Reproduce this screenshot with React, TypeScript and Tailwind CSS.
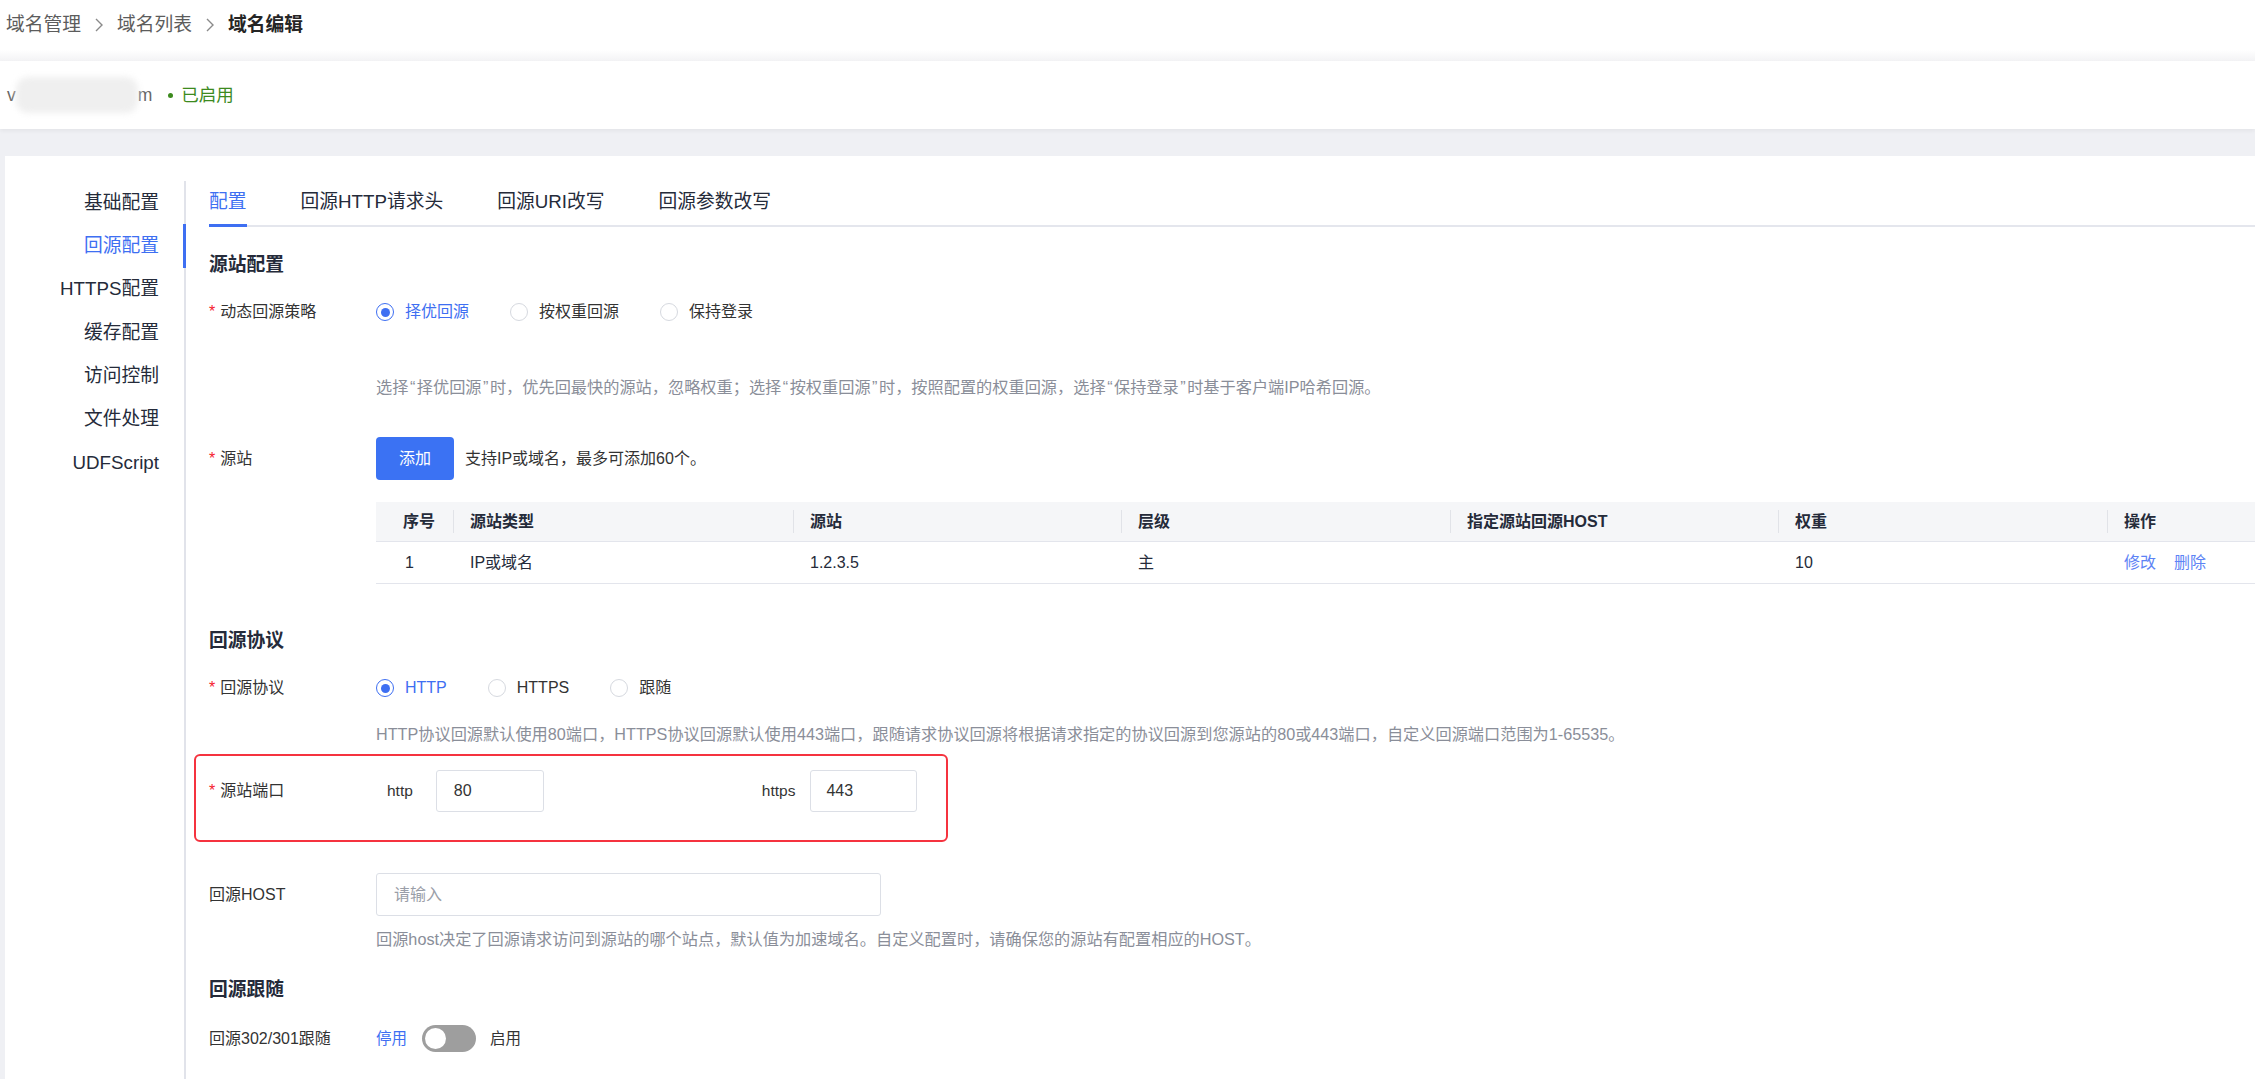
import React from 'react';

const menu = ['基础配置', '回源配置', 'HTTPS配置', '缓存配置', '访问控制', '文件处理', 'UDFScript'];
const tabs = ['配置', '回源HTTP请求头', '回源URI改写', '回源参数改写'];
const columns = ['序号', '源站类型', '源站', '层级', '指定源站回源HOST', '权重', '操作'];

function Chevron() {
  return (
    <svg width="8" height="14" viewBox="0 0 8 14" className="mx-[14px]">
      <polyline points="1,1 7,7 1,13" fill="none" stroke="#8a8a8a" strokeWidth="1.4" />
    </svg>
  );
}

function Q({ c }: { c: string }) {
  return <span className="mx-[1.5px]">{c}</span>;
}

function Radio({ checked, label }: { checked?: boolean; label: string }) {
  return (
    <div className="flex items-center">
      {checked ? (
        <span className="w-[18px] h-[18px] rounded-full border-[1.5px] border-[#3e6ff2] flex items-center justify-center">
          <span className="w-[9px] h-[9px] rounded-full bg-[#3e6ff2]" />
        </span>
      ) : (
        <span className="w-[18px] h-[18px] rounded-full border border-[#d6d9df]" />
      )}
      <span className={checked ? 'ml-[11px] text-[#3e6ff2]' : 'ml-[11px] text-[#333]'}>{label}</span>
    </div>
  );
}

function Label({ text, required }: { text: string; required?: boolean }) {
  return (
    <div className="w-[167px] shrink-0 text-[#333] flex items-center">
      {required && <span className="text-[#f5222d] mr-[5px]">*</span>}
      <span>{text}</span>
    </div>
  );
}

export default function App() {
  return (
    <div className="w-[2255px] h-[1079px] overflow-hidden bg-white text-[16px] text-[#333] font-['Liberation_Sans','Noto_Sans_CJK_SC',sans-serif]">
      {/* Breadcrumb */}
      <div className="h-[50px] flex items-center pl-[6px] text-[18.75px]">
        <span className="text-[#5c5c5c]">域名管理</span>
        <Chevron />
        <span className="text-[#5c5c5c]">域名列表</span>
        <Chevron />
        <span className="font-bold text-[#252525]">域名编辑</span>
      </div>
      <div className="h-[11px] bg-gradient-to-b from-white to-[#f3f3f5]" />

      {/* Domain bar */}
      <div className="h-[68px] flex items-center pl-[7px] text-[17.5px] bg-white relative z-10 shadow-[0_2px_4px_rgba(0,0,0,0.05)]">
        <span className="text-[#666]">v</span>
        <span className="w-[122px] h-[36px] rounded-[12px] bg-[#efefef] blur-[3px]" />
        <span className="text-[#666]">m</span>
        <span className="ml-[16px] w-[5px] h-[5px] rounded-full bg-[#3c8a1e]" />
        <span className="ml-[8px] text-[#3c8a1e]">已启用</span>
      </div>

      {/* Body */}
      <div className="bg-[#eff0f4] pl-[5px] pt-[27px] h-full">
        <div className="bg-white flex h-full">
          {/* Side menu */}
          <div className="w-[181px] shrink-0 mt-[25px] border-r-2 border-[#e1e3ea]">
            {menu.map((m, i) => (
              <div key={m} className="relative h-[43.33px] flex items-center justify-end pr-[25px] text-[18.75px]">
                <span className={i === 1 ? 'text-[#3e6ff2]' : 'text-[#252b3a]'}>{m}</span>
                {i === 1 && <span className="absolute right-[-2px] top-0 w-[3px] h-full bg-[#3e6ff2]" />}
              </div>
            ))}
          </div>

          {/* Content */}
          <div className="flex-1 pl-[23px]">
            {/* Tabs */}
            <div className="mt-[24px] flex gap-[54px] border-b-2 border-[#e4e6ed] text-[18.75px]">
              {tabs.map((t, i) => (
                <div
                  key={t}
                  className={
                    i === 0
                      ? 'h-[47px] pt-[9px] leading-[26px] -mb-[2px] border-b-[3px] border-[#3e6ff2] text-[#3e6ff2]'
                      : 'h-[45px] pt-[9px] leading-[26px] text-[#252b3a]'
                  }
                >
                  {t}
                </div>
              ))}
            </div>

            {/* 源站配置 */}
            <div className="mt-[25px] leading-[26px] text-[18.75px] font-bold text-[#252b3a]">源站配置</div>

            <div className="mt-[21px] flex h-[26px] items-center">
              <Label text="动态回源策略" required />
              <div className="flex items-center gap-[41px]">
                <Radio checked label="择优回源" />
                <Radio label="按权重回源" />
                <Radio label="保持登录" />
              </div>
            </div>
            <div className="mt-[51px] ml-[167px] leading-[22px] text-[16.2px] text-[#8a8e99]">
              选择<Q c="“" />择优回源<Q c="”" />时，优先回最快的源站，忽略权重；选择<Q c="“" />按权重回源<Q c="”" />时，按照配置的权重回源，选择<Q c="“" />保持登录<Q c="”" />时基于客户端IP哈希回源。
            </div>

            <div className="mt-[39px] flex items-center">
              <Label text="源站" required />
              <button className="w-[78px] h-[43px] rounded-[4px] bg-[#3b72f3] text-white">添加</button>
              <span className="ml-[11px] text-[#333]">支持IP或域名，最多可添加60个。</span>
            </div>

            {/* Table */}
            <div className="mt-[22px] ml-[167px]">
              <div className="grid grid-cols-[77px_340px_328px_329px_328px_329px_1fr] h-[40px] bg-[#f5f6f8] border-b border-[#e3e5ec] font-bold text-[#252b3a]">
                {columns.map((c, i) => (
                  <div key={c} className="flex items-center">
                    {i > 0 && <span className="w-px h-[23px] bg-[#e1e3e8]" />}
                    <span className={i === 0 ? 'pl-[27px]' : 'pl-[16px]'}>{c}</span>
                  </div>
                ))}
              </div>
              <div className="grid grid-cols-[77px_340px_328px_329px_328px_329px_1fr] h-[42px] border-b border-[#e3e5ec] text-[#252b3a] items-center">
                <span className="pl-[29px]">1</span>
                <span className="pl-[17px]">IP或域名</span>
                <span className="pl-[17px]">1.2.3.5</span>
                <span className="pl-[17px]">主</span>
                <span className="pl-[17px]"></span>
                <span className="pl-[17px]">10</span>
                <span className="pl-[17px] flex gap-[18px] text-[#5d83f5]">
                  <span>修改</span>
                  <span>删除</span>
                </span>
              </div>
            </div>

            {/* 回源协议 */}
            <div className="mt-[44px] leading-[26px] text-[18.75px] font-bold text-[#252b3a]">回源协议</div>
            <div className="mt-[21px] flex h-[26px] items-center">
              <Label text="回源协议" required />
              <div className="flex items-center gap-[41px]">
                <Radio checked label="HTTP" />
                <Radio label="HTTPS" />
                <Radio label="跟随" />
              </div>
            </div>
            <div className="mt-[22px] ml-[167px] leading-[22px] text-[16.2px] text-[#8a8e99]">
              HTTP协议回源默认使用80端口，HTTPS协议回源默认使用443端口，跟随请求协议回源将根据请求指定的协议回源到您源站的80或443端口，自定义回源端口范围为1-65535。
            </div>

            <div className="mt-[9px] -ml-[15px] w-[754px] h-[88px] border-2 border-[#f5333f] rounded-[6px] pl-[13px] pt-[14px]">
              <div className="flex items-center h-[42px]">
                <Label text="源站端口" required />
                <span className="ml-[11px] text-[15.5px] text-[#333]">http</span>
                <div className="ml-[23px] w-[108px] h-[42px] border border-[#dcdfe6] rounded-[3px] flex items-center pl-[17px] text-[#333]">80</div>
                <span className="ml-[218px] text-[15.5px] text-[#333]">https</span>
                <div className="ml-[15px] w-[107px] h-[42px] border border-[#dcdfe6] rounded-[3px] flex items-center pl-[15px] text-[#333]">443</div>
              </div>
            </div>

            <div className="mt-[31px] flex items-center">
              <Label text="回源HOST" />
              <div className="w-[505px] h-[43px] border border-[#dcdfe6] rounded-[3px] flex items-center pl-[17px] text-[#9a9ea8]">请输入</div>
            </div>
            <div className="mt-[12px] ml-[167px] leading-[22px] text-[16.2px] text-[#8a8e99]">
              回源host决定了回源请求访问到源站的哪个站点，默认值为加速域名。自定义配置时，请确保您的源站有配置相应的HOST。
            </div>

            {/* 回源跟随 */}
            <div className="mt-[27px] leading-[26px] text-[18.75px] font-bold text-[#252b3a]">回源跟随</div>
            <div className="mt-[22px] flex items-center h-[27px]">
              <Label text="回源302/301跟随" />
              <span className="text-[#3e6ff2] text-[15.5px]">停用</span>
              <span className="ml-[15px] w-[54px] h-[27px] rounded-full bg-[#9e9e9e] flex items-center pl-[3px]">
                <span className="w-[21px] h-[21px] rounded-full bg-white" />
              </span>
              <span className="ml-[14px] text-[15.5px] text-[#333]">启用</span>
            </div>
          </div>
        </div>
      </div>
    </div>
  );
}
